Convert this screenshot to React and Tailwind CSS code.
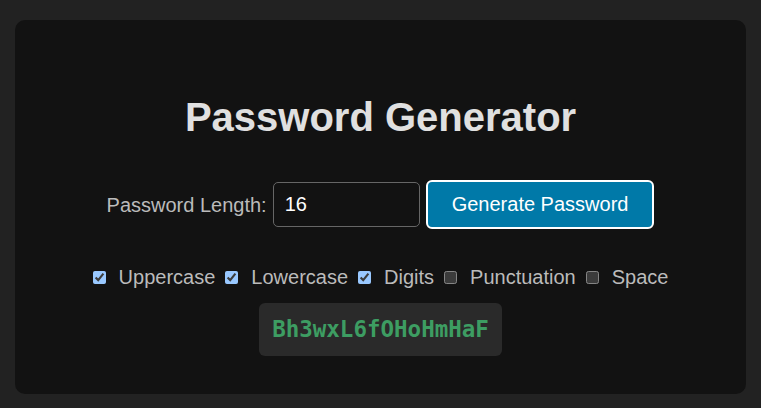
import React, { useState } from "react";

function Check({ label, defaultChecked }) {
  const [c, setC] = useState(defaultChecked);
  return (
    <label className="flex items-center">
      <input
        type="checkbox"
        checked={c}
        onChange={() => setC(!c)}
        className="w-[13px] h-[13px] m-0 [color-scheme:dark]"
      />
      <span className="ml-[13px]">{label}</span>
    </label>
  );
}

export default function App() {
  return (
    <div
      className="w-[761px] h-[408px] bg-[#222222] pt-[20px] px-[15px] [color-scheme:dark]"
      style={{ fontFamily: '"Liberation Sans", Arial, sans-serif' }}
    >
      <div className="h-[374px] rounded-[10px] bg-[#121212] flex flex-col items-center pt-[74px]">
        <h1 className="text-[40px] leading-[46px] font-bold text-[#e0e0e0]">
          Password Generator
        </h1>
        <div className="mt-[40px] flex items-center text-[20px]">
          <span className="text-[#bbbbbb] leading-[23px] translate-y-[1px]">Password Length:</span>
          <input
            type="number"
            defaultValue={16}
            className="ml-[6px] w-[147px] h-[45px] rounded-[5px] border border-[#666666] bg-[#121212] text-white text-[20px] pl-[11px] outline-none [appearance:textfield]"
            style={{ fontFamily: '"Liberation Sans", Arial, sans-serif' }}
          />
          <button className="ml-[6px] h-[49px] px-[24px] rounded-[6px] border-2 border-white bg-[#0079a8] text-white text-[20px] leading-[23px]">
            Generate Password
          </button>
        </div>
        <div className="mt-[37px] flex items-center gap-[10px] text-[20px] leading-[23px] text-[#bbbbbb]">
          <Check label="Uppercase" defaultChecked />
          <Check label="Lowercase" defaultChecked />
          <Check label="Digits" defaultChecked />
          <Check label="Punctuation" />
          <Check label="Space" />
        </div>
        <div className="mt-[14px] h-[53px] px-[13px] rounded-[6px] bg-[#2a2a2a] flex items-center">
          <span
            className="text-[22.5px] font-bold text-[#3d9d62]"
            style={{ fontFamily: '"DejaVu Sans Mono", monospace' }}
          >
            Bh3wxL6fOHoHmHaF
          </span>
        </div>
      </div>
    </div>
  );
}
